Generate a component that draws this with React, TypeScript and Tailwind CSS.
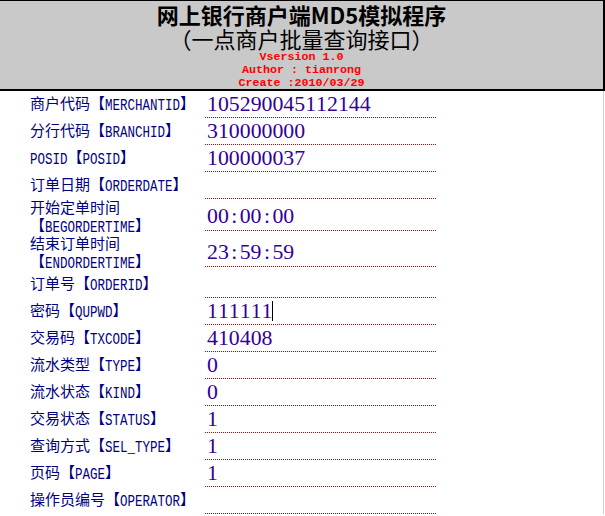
import React from 'react';

type Row = {
  label: string;
  value: string;
  caret?: boolean;
};

const rows: Row[] = [
  { label: '商户代码【MERCHANTID】', value: '105290045112144' },
  { label: '分行代码【BRANCHID】', value: '310000000' },
  { label: 'POSID【POSID】', value: '100000037' },
  { label: '订单日期【ORDERDATE】', value: '' },
  { label: '开始定单时间\n【BEGORDERTIME】', value: '00:00:00' },
  { label: '结束订单时间\n【ENDORDERTIME】', value: '23:59:59' },
  { label: '订单号【ORDERID】', value: '' },
  { label: '密码【QUPWD】', value: '111111', caret: true },
  { label: '交易码【TXCODE】', value: '410408' },
  { label: '流水类型【TYPE】', value: '0' },
  { label: '流水状态【KIND】', value: '0' },
  { label: '交易状态【STATUS】', value: '1' },
  { label: '查询方式【SEL_TYPE】', value: '1' },
  { label: '页码【PAGE】', value: '1' },
  { label: '操作员编号【OPERATOR】', value: '' },
];

// latin runs get a narrow monospace so they sit at half the CJK width
function LabelLine({ text }: { text: string }) {
  const parts = text.split(/([A-Za-z_]+)/);
  return (
    <div className="whitespace-nowrap">
      {parts.map((p, i) =>
        /^[A-Za-z_]+$/.test(p) ? (
          <span
            key={i}
            className="inline-block scale-y-[1.25] font-['Liberation_Mono',monospace] text-[12.5px]"
          >
            {p}
          </span>
        ) : (
          <span key={i}>{p}</span>
        )
      )}
    </div>
  );
}

function Value({ text }: { text: string }) {
  return (
    <>
      {text.split('').map((c, i) =>
        c === ':' ? (
          <span key={i} className="inline-block w-[10.9px] text-center">
            :
          </span>
        ) : (
          <span key={i}>{c}</span>
        )
      )}
    </>
  );
}

export default function App() {
  return (
    <div className="w-[605px] h-[516px] bg-white overflow-hidden">
      <div className="w-[605px] h-[91px] bg-[#c9c9c9] border-t border-r-2 border-b-2 border-black text-center pt-[1px]">
        <div className="h-[24px] leading-[24px] text-[22px] font-bold text-black font-['Noto_Sans_CJK_SC',sans-serif]">
          网上银行商户端MD5模拟程序
        </div>
        <div className="h-[24px] leading-[24px] text-[22px] text-black font-['Noto_Sans_CJK_SC',sans-serif]">
          （一点商户批量查询接口）
        </div>
        <div className="pt-[1px] text-[11.7px] leading-[13px] font-bold text-[#ff0000] font-['Liberation_Mono',monospace]">
          <div>Vsersion 1.0</div>
          <div>Author : tianrong</div>
          <div>Create :2010/03/29</div>
        </div>
      </div>
      <div className="pl-[30px] border-r border-[#d0d0d0] w-[604px]">
        {rows.map((r) => {
          const lines = r.label.split('\n');
          return (
            <div
              key={r.label}
              className={`flex items-center ${lines.length > 1 ? 'h-[36px]' : 'h-[27px]'}`}
            >
              <div className="w-[175px] text-[15px] leading-[18px] text-[#000080] font-['Noto_Sans_CJK_SC',sans-serif]">
                {lines.map((l) => (
                  <LabelLine key={l} text={l} />
                ))}
              </div>
              <div className="w-[231px] h-[27px] flex items-center pl-[2px] border-b border-dotted border-[#cc0000] text-[21.8px] text-[#330099] font-['Liberation_Serif',serif] whitespace-nowrap">
                <Value text={r.value} />
                {r.caret && <span className="inline-block w-px h-[20px] bg-black" />}
              </div>
            </div>
          );
        })}
      </div>
    </div>
  );
}
